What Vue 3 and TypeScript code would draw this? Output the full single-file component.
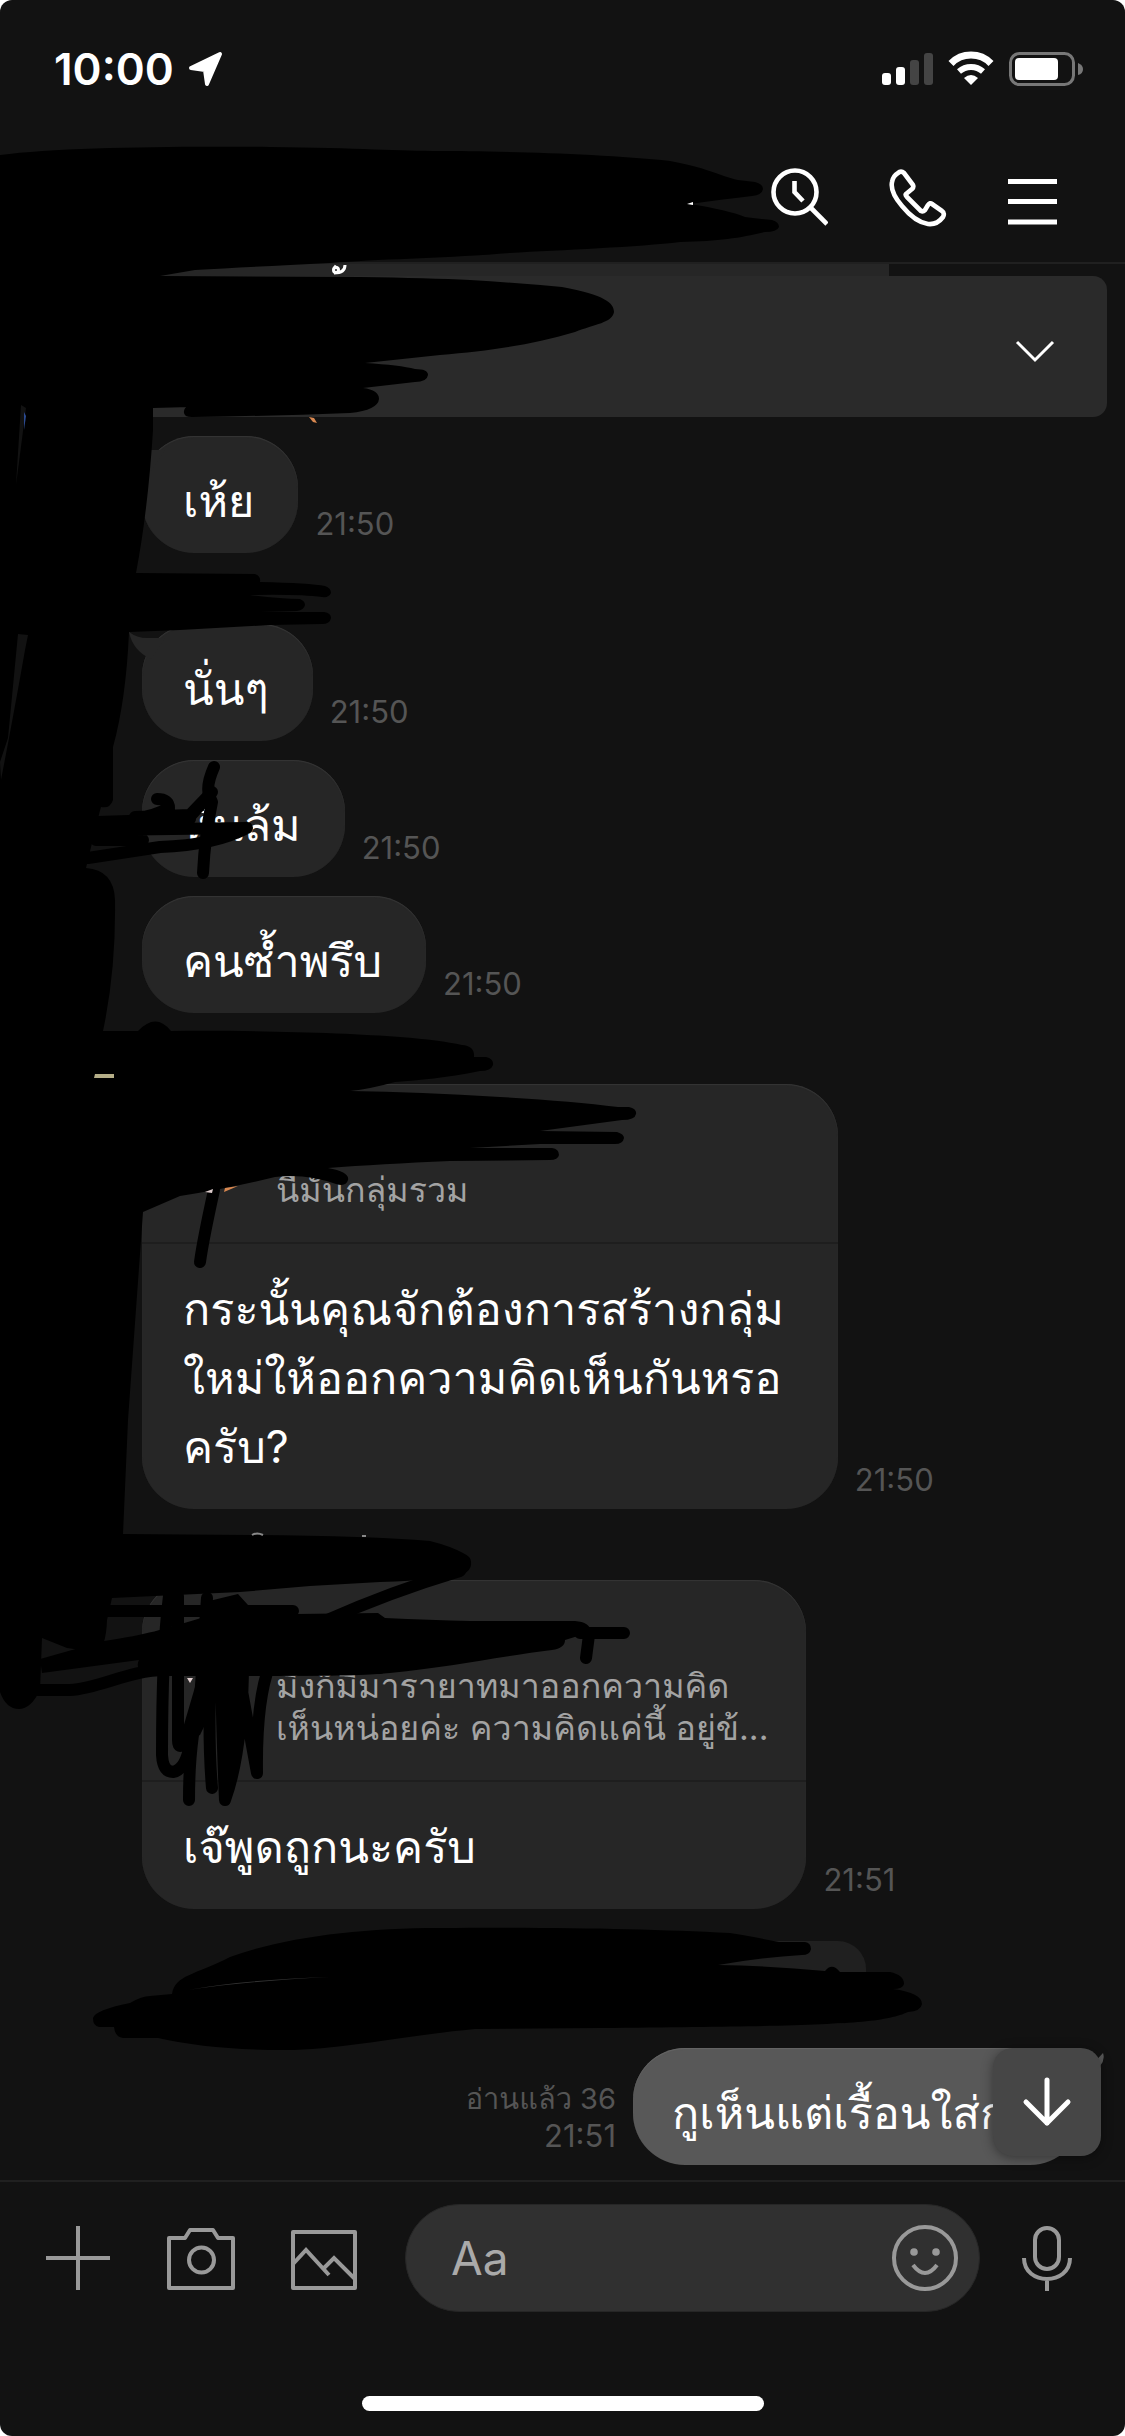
<script setup lang="ts">
import { ref } from 'vue'

interface Message {
  id: number
  text: string
  time: string
  quote?: string
  named?: boolean
  tail?: boolean
}

const messages: Message[] = [
  { id: 1, text: 'เห้ย', time: '21:50', tail: true },
  { id: 2, text: 'นั่นๆ', time: '21:50', named: true, tail: true },
  { id: 3, text: 'หินล้ม', time: '21:50' },
  { id: 4, text: 'คนซ้ำพรึบ', time: '21:50' },
  {
    id: 5,
    text: 'กระนั้นคุณจักต้องการสร้างกลุ่ม\nใหม่ให้ออกความคิดเห็นกันหรอ\nครับ?',
    time: '21:50',
    quote: 'นี่มันกลุ่มรวม',
    named: true,
  },
  {
    id: 6,
    text: 'เจ๊พูดถูกนะครับ',
    time: '21:51',
    quote: 'มึงก็มีมารายาทมาออกความคิด\nเห็นหน่อยค่ะ ความคิดแค่นี้ อยู่ข้...',
    named: true,
  },
]

const draft = ref('')
</script>

<template>
  <div class="screen">
    <header class="top">
      <div class="status">
        <span class="clock">10:00</span>
        <svg class="locate" width="36" height="36" viewBox="0 0 36 36">
          <path d="M32 3 L19 33 L17 19 L3 17 Z" fill="#fff" stroke="#fff" stroke-width="4" stroke-linejoin="round" />
        </svg>
        <svg class="signals" width="202" height="36" viewBox="0 0 202 36">
          <rect x="1" y="22" width="9" height="12" rx="3" fill="#fff" />
          <rect x="15" y="16" width="9" height="18" rx="3" fill="#fff" />
          <rect x="29" y="9" width="9" height="25" rx="3" fill="#444" />
          <rect x="43" y="2" width="9" height="32" rx="3" fill="#444" />
          <g fill="none" stroke="#fff">
            <path d="M70 12.500 A28 28 0 0 1 110 12.500" stroke-width="7" />
            <path d="M78 20.500 A18 18 0 0 1 102 20.500" stroke-width="6" />
          </g>
          <path d="M83 27 Q90 21 97 27 L90 34 Z" fill="#fff" />
          <rect x="129.500" y="2.500" width="63" height="31" rx="9" fill="none" stroke="#777" stroke-width="3" />
          <rect x="134" y="7" width="43" height="22" rx="4" fill="#fff" />
          <path d="M197 12 Q202 14 202 18 Q202 23 197 24 Z" fill="#777" />
        </svg>
      </div>
      <nav class="actions">
        <button type="button" aria-label="Search">
          <svg width="58" height="60" viewBox="0 0 58 60" fill="none" stroke="#fff" stroke-width="4.600">
            <circle cx="25" cy="24" r="21.500" />
            <path d="M40 39 L57 56" />
            <path d="M24.500 13 V24 L33 33" />
          </svg>
        </button>
        <button type="button" aria-label="Call">
          <svg width="60" height="60" viewBox="0 0 60 60" fill="none" stroke="#fff" stroke-width="4.600" stroke-linejoin="round">
            <path d="M10 5 Q13 2 16 5 L25 17 Q26 19 24 21 L18 26 Q17 27 19 29 L33 43 Q35 44 37 42 L40 37 Q42 34 44 36 L54 43 Q57 45 55 49 Q49 57 40 56 Q27 54 14 38 Q2 24 4 14 Q5 8 10 5 Z" />
          </svg>
        </button>
        <button type="button" aria-label="Menu">
          <svg width="49" height="60" viewBox="0 0 49 60" stroke="#fff" stroke-width="5">
            <path d="M0 13.500 H49 M0 33.500 H49 M0 54 H49" />
          </svg>
        </button>
      </nav>
    </header>

    <main class="chat">
      <div class="cut">
        <svg width="18" height="12" viewBox="0 0 18 12" fill="none" stroke="#fff" stroke-width="3">
          <path d="M4 2 L7 4 M4 9 Q15 9 15 1" />
          <circle cx="6" cy="6" r="2.500" />
        </svg>
      </div>
      <section class="notice">
        <button type="button" aria-label="Expand">
          <svg width="40" height="24" viewBox="0 0 40 24" fill="none" stroke="#fff" stroke-width="3">
            <path d="M2 2 L20 20 L38 2" />
          </svg>
        </button>
      </section>

      <article v-for="m in messages" :key="m.id" class="row" :class="{ named: m.named }">
        <div class="bubble" :class="{ reply: m.quote }">
          <svg v-if="m.tail" class="tail" width="40" height="30" viewBox="0 0 40 30">
            <path d="M0 1 Q8 7 18 7 L36 7 L22 28 Q4 20 0 1 Z" fill="#262626" />
          </svg>
          <blockquote v-if="m.quote">{{ m.quote }}</blockquote>
          <p>{{ m.text }}</p>
        </div>
        <time>{{ m.time }}</time>
      </article>

      <div class="event"></div>

      <article class="row own">
        <div class="receipt">
          <span>อ่านแล้ว 36</span>
          <time>21:51</time>
        </div>
        <div class="bubble">
          <p>กูเห็นแต่เรื้อนใส่ก</p>
          <svg class="own-tail" width="30" height="24" viewBox="0 0 30 24">
            <path d="M28 1 Q32 12 14 23 L2 14 Q20 12 28 1 Z" fill="#585858" />
          </svg>
        </div>
        <button class="jump" type="button" aria-label="Scroll to latest">
          <svg width="50" height="50" viewBox="0 0 50 50" fill="none" stroke="#fff" stroke-width="5" stroke-linecap="round" stroke-linejoin="round">
            <path d="M25 3 V46 M4 25 L25 46 L46 25" />
          </svg>
        </button>
      </article>
    </main>

    <footer class="composer">
      <div class="tools">
        <button type="button" aria-label="Add">
          <svg width="64" height="64" viewBox="0 0 64 64" stroke="#999" stroke-width="4"><path d="M32 0 V64 M0 32 H64" /></svg>
        </button>
        <button class="camera" type="button" aria-label="Camera">
          <svg width="68" height="64" viewBox="0 0 68 64" fill="none" stroke="#999" stroke-width="4" stroke-linejoin="round">
            <path d="M2 12 H18 L23 4 H46 L51 12 H66 V62 H2 Z" />
            <circle cx="34.500" cy="34" r="12.500" />
          </svg>
        </button>
        <button class="photo" type="button" aria-label="Photos">
          <svg width="66" height="64" viewBox="0 0 66 64" fill="none" stroke="#999" stroke-width="4" stroke-linejoin="round">
            <rect x="2" y="6" width="62" height="56" />
            <path d="M2 38 L15 24 L38 49 M32 43 L43 32 L64 53" stroke-linejoin="miter" />
          </svg>
        </button>
        <div class="field">
          <input v-model="draft" type="text" placeholder="Aa" aria-label="Message" />
          <button type="button" aria-label="Emoji">
            <svg width="68" height="68" viewBox="0 0 68 68" fill="none" stroke="#999" stroke-width="4">
              <circle cx="34" cy="34" r="31" />
              <path d="M22 41 Q34 57 46 41" />
              <g fill="#999" stroke="none"><circle cx="23" cy="28" r="3.800" /><circle cx="45" cy="28" r="3.800" /></g>
            </svg>
          </button>
        </div>
        <button type="button" aria-label="Voice">
          <svg width="50" height="66" viewBox="0 0 50 66" fill="none" stroke="#999" stroke-width="4">
            <rect x="13" y="3" width="24" height="41" rx="12" />
            <path d="M2 33 C2 61 48 61 48 33 M25 54 V66" />
          </svg>
        </button>
      </div>
      <div class="home"></div>
    </footer>

    <!-- Hand-drawn marker strokes covering names and avatars -->
    <svg class="ink" viewBox="0 0 1125 2436" aria-hidden="true">
      <g>
        <path d="M0 155 C60 147 180 146 270 147 S400 151 440 151 S600 153 670 161 C705 167 720 176 738 180 L755 182 Q763 184 763 189 Q762 195 752 196 Q725 199 690 204 Q728 210 745 217 Q760 219 772 220 Q779 222 779 227 Q777 232 765 232 C740 238 720 241 680 242 C640 247 560 250 510 253 C450 258 380 259 330 263 Q250 267 195 270 L160 276 L360 277 Q430 278 470 280 Q520 283 562 287 C605 295 614 303 614 312 C612 323 595 324 575 332 C530 345 490 351 440 355 L365 363 Q400 365 415 369 Q428 369 428 375 Q427 382 415 382 L363 388 Q379 390 379 399 Q378 410 350 413 Q270 416 192 417 Q183 417 184 411 Q185 406 190 407 L153 408 L153 430 Q148 510 136 573 L255 574 Q261 576 260 582 Q310 583 325 586 Q331 588 331 593 Q329 598 322 597 Q300 594 250 595 Q280 599 300 599 Q305 601 305 605 Q304 610 297 611 L260 612 L324 612 Q331 613 331 618 Q330 624 322 624 L270 625 L180 630 L129 632 Q126 700 113 747 V800 Q110 809 101 807 L98 818 L86 868 Q114 870 115 900 Q116 970 103 1031 L138 1031 Q156 1012 171 1031 C250 1030 350 1033 400 1037 Q440 1040 462 1045 Q475 1046 474 1057 L486 1057 Q494 1059 493 1065 Q491 1071 480 1071 C445 1078 420 1080 395 1082 Q370 1089 350 1091 Q420 1092 500 1097 Q570 1101 618 1107 H629 Q637 1109 636 1114 Q635 1120 622 1120 L540 1131 L617 1132 Q624 1134 624 1138 Q623 1144 615 1144 H540 L470 1148 H552 Q559 1149 559 1155 Q558 1160 550 1160 L450 1161 Q380 1164 328 1168 Q350 1172 348 1180 Q346 1187 336 1184 Q305 1173 275 1177 Q230 1188 180 1196 L143 1212 L141 1240 L128 1420 L123 1534 L250 1535 Q370 1536 430 1541 Q450 1546 463 1553 Q472 1557 471 1563 Q472 1570 462 1575 Q445 1580 380 1582 L310 1586 L240 1592 L112 1598 L107 1620 Q106 1650 95 1652 L67 1648 L42 1638 L40 1690 Q31 1709 19 1709 Q6 1709 0 1692 Z" />
        <path d="M40 1659 Q65 1652 104 1641 C150 1634 160 1630 201 1618 L205 1602 L238 1594 L248 1605 L255 1614 L295 1614 L378 1613 L385 1618 Q430 1620 470 1621 L575 1621 Q590 1622 591 1632 L565 1640 Q565 1648 552 1650 C490 1658 450 1667 390 1673 C340 1677 300 1676 250 1674 L140 1673 Q136 1665 139 1660 L42 1673 Z" />
        <path d="M172 1994 C175 1975 195 1975 230 1957 C285 1937 360 1928 440 1928 C560 1927 650 1929 730 1933 Q760 1938 779 1942 H805 Q811 1943 811 1949 Q810 1955 802 1955 Q765 1957 718 1965 Q775 1966 825 1971 Q832 1962 840 1972 H890 Q904 1975 904 1984 Q903 1989 893 1989 Q922 1993 922 2004 Q921 2011 908 2012 C880 2025 820 2026 600 2028 L475 2029 C400 2036 340 2050 285 2050 Q210 2050 158 2038 H123 Q115 2037 114 2027 H99 Q93 2026 93 2018 Q95 2010 130 2003 Q142 1996 150 1996 Z" />
      </g>
      <g class="stroke">
        <path d="M214 767 Q206 785 209 795 L212 802 Q205 835 203 873" />
        <path d="M157 799 Q169 799 169 808 Q150 818 135 817 L190 815 L212 792 L185 822" />
        <path d="M98 822 L190 819 M96 830 L247 828 M96 840 H143 M247 828 Q215 845 160 847 L88 858" />
        <path d="M214 1190 Q203 1240 200 1262" />
        <path d="M460 1571 Q390 1592 325 1621 M108 1611 H293 M580 1633 H624 M589 1635 L586 1658" />
        <path d="M38 1690 H70 C100 1688 130 1670 165 1670 H280 L380 1668" />
        <path d="M169 1596 Q162 1650 162 1755 Q163 1772 173 1772 Q185 1770 190 1745 L205 1680 M178 1596 V1740 Q178 1754 190 1735 L208 1670" />
        <path d="M207 1598 L200 1700 Q189 1740 189 1800 M212 1640 Q207 1730 212 1788 M220 1630 Q222 1730 225 1800 Q243 1750 243 1660 L228 1760 M240 1680 L257 1773 Q256 1700 270 1664" />
      </g>
      <path d="M200 1655 H248 V1700 L240 1680 L225 1770 L217 1700 L200 1735 L178 1745 L200 1670 Z" />
      <g fill="#121212">
        <path d="M21 405 L26 408 L16 485 Z" />
        <path d="M18 634 L28 635 L25 650 Q18 690 9 738 L1 780 L0 762 L8 738 Z" />
      </g>
      <path d="M188 1990 Q240 1980 330 1977 Q250 1981 188 1990 Z" fill="#333" />
      <path d="M309 417 L314 418 L317 423 L313 422 Z" fill="#d98850" />
      <path d="M95 1074 H114 V1078 H94 Z" fill="#b5ae88" />
      <path d="M205 1192 L213 1189 L212 1193 Z" fill="#dcc" />
      <path d="M225 1188 L238 1186 L224 1192 Z" fill="#d98850" />
      <path d="M187 1678 H193 L190 1683 Z" fill="#dcc" />
      <path d="M687 204 L693 202 V205 Z" fill="#fff" />
      <path d="M24 412 L26 416 L24 430 Z" fill="#2b4a90" />
      <path d="M252 1535 Q257 1532 263 1535 M362 1536 H366" fill="none" stroke="#888" stroke-width="2" />
    </svg>
  </div>
</template>

<style>
body {
  margin: 0;
  background: #fff;
}
</style>

<style scoped>
.screen {
  display: flex;
  flex-direction: column;
  position: relative;
  min-height: 100vh;
  overflow: hidden;
  border-radius: 12px;
  background: #121212;
  color: #fff;
  font-family: Inter, Loma, FreeSans, sans-serif;
}
button {
  display: flex;
  padding: 0;
  border: 0;
  background: none;
}
svg {
  display: block;
}
p,
blockquote {
  margin: 0;
  white-space: pre;
}
.top {
  border-bottom: 2px solid #202020;
}
.status {
  display: flex;
  align-items: center;
  height: 138px;
  padding: 0 42px 0 54px;
}
.clock {
  font-size: 44px;
  font-weight: 600;
  line-height: 54px;
}
.locate {
  margin-left: 14px;
}
.signals {
  margin-left: auto;
}
.actions {
  display: flex;
  justify-content: flex-end;
  gap: 60px;
  height: 94px;
  padding: 30px 68px 0 0;
}
.cut {
  display: flex;
  width: 747px;
  height: 12px;
  margin-left: 142px;
  padding-left: 188px;
  box-sizing: border-box;
  background: #262626;
}
.notice {
  display: flex;
  justify-content: flex-end;
  align-items: center;
  height: 141px;
  margin: 0 18px;
  padding: 10px 52px 0 0;
  box-sizing: border-box;
  border-radius: 14px;
  background: #2a2a2a;
}
.row {
  display: flex;
  align-items: flex-end;
  gap: 17px;
  margin-top: 19px;
  padding-left: 142px;
}
.named {
  margin-top: 71px;
}
.bubble {
  position: relative;
  padding: 30px 44px 18px 41px;
  border-radius: 52px;
  background: #262626;
  box-shadow: inset 0 1px 1px #363636;
  font-size: 45px;
  line-height: 69px;
}
.tail {
  position: absolute;
  left: -13px;
  top: 7px;
}
.reply {
  padding: 0;
}
.reply p {
  padding: 30px 54px 28px 41px;
}
blockquote {
  padding: 85px 38px 31px 134px;
  border-bottom: 2px solid #1e1e1e;
  color: #a3a3a3;
  font-size: 34px;
  line-height: 42px;
}
time {
  color: #555;
  font-size: 31px;
  line-height: 37px;
}
.row > time {
  padding-bottom: 11px;
}
.event {
  width: 598px;
  height: 83px;
  margin: 32px 0 0 268px;
  border-radius: 28px;
  background: #202020;
}
.own {
  position: relative;
  justify-content: flex-end;
  margin-top: 24px;
  padding: 0 43px 15px 0;
}
.own .bubble {
  min-width: 449px;
  padding: 30px 39px 18px;
  box-sizing: border-box;
  background: #585858;
  box-shadow: inset 0 1px 1px #666;
}
.receipt {
  display: flex;
  flex-direction: column;
  align-items: flex-end;
  padding-bottom: 11px;
  color: #555;
  font-size: 29px;
  line-height: 37px;
}
.own-tail {
  position: absolute;
  right: -23px;
  top: 4px;
}
.jump {
  position: absolute;
  right: 24px;
  top: 0;
  align-items: center;
  justify-content: center;
  width: 108px;
  height: 108px;
  border-radius: 20px;
  background: #464646;
  box-shadow: 0 2px 12px rgba(0, 0, 0, 0.4);
}
.composer {
  border-top: 2px solid #202020;
}
.tools {
  display: flex;
  align-items: center;
  padding: 22px 53px 84px 46px;
}
.camera {
  margin-left: 57px;
}
.photo {
  margin-left: 56px;
}
.field {
  display: flex;
  flex: 1;
  align-items: center;
  min-width: 0;
  height: 108px;
  margin: 0 42px 0 48px;
  padding: 0 20px 0 45px;
  box-sizing: border-box;
  border: 1px solid #262626;
  border-radius: 54px;
  background: #303030;
}
.field input {
  flex: 1;
  width: 100%;
  min-width: 0;
  padding: 0;
  border: 0;
  outline: 0;
  background: none;
  color: #fff;
  font: 46px Inter, sans-serif;
}
.field input::placeholder {
  color: #aaa;
  opacity: 1;
}
.home {
  width: 402px;
  height: 15px;
  margin: 0 auto 24px;
  border-radius: 8px;
  background: #fff;
}
.ink {
  position: absolute;
  inset: 0;
  width: 100%;
  pointer-events: none;
}
.stroke {
  fill: none;
  stroke: #000;
  stroke-width: 12;
  stroke-linecap: round;
  stroke-linejoin: round;
}
</style>
